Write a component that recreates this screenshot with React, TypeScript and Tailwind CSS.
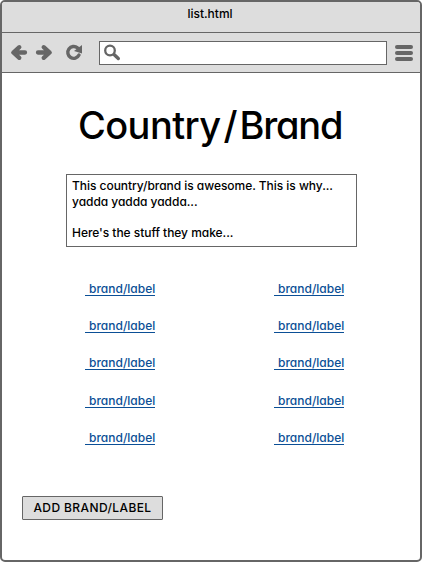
const LINKS = Array.from({ length: 10 }, () => 'brand/label');

function Toolbar() {
  return (
    <div className="flex h-[40px] items-start border-b border-[#666] pt-[8px] pl-[8px]">
      <svg className="h-[24px] w-[90px] shrink-0" viewBox="10 41 90 24" fill="none" stroke="#666">
        <path d="M25 52.500H13.500M19.300 47.200l-6 5.300 6 5.300" strokeWidth="4.300" strokeLinecap="round" strokeLinejoin="round" />
        <path d="M38 52.500h11.500M43.700 47.200l6 5.300-6 5.300" strokeWidth="4.300" strokeLinecap="round" strokeLinejoin="round" />
        <path d="M77.500 47.900A5.900 5.900 0 1 0 79 55" strokeWidth="3.400" strokeLinecap="round" />
        <path d="M82 45v8.500l-8-2.500z" fill="#666" stroke="none" />
      </svg>
      <div className="-ml-px h-[24px] w-[288px] shrink-0 border border-[#666] bg-white">
        <svg className="h-[20px] w-[24px]" viewBox="100 42 24 20" fill="none" stroke="#666">
          <circle cx="110" cy="50.500" r="4.800" strokeWidth="2.300" />
          <path d="M114.300 54.700l4 3.800" strokeWidth="3.400" strokeLinecap="round" />
        </svg>
      </div>
      <div className="ml-[8px] flex flex-col gap-[2px] pt-[4px]">
        <div className="h-[4px] w-[18px] rounded-[2px] bg-[#666]" />
        <div className="h-[4px] w-[18px] rounded-[2px] bg-[#666]" />
        <div className="h-[4px] w-[18px] rounded-[2px] bg-[#666]" />
      </div>
    </div>
  );
}

export default function App() {
  return (
    <div className="h-[562px] w-[422px] bg-white font-['Inter','Liberation_Sans',sans-serif] text-[12px] text-black [font-feature-settings:'cv11']">
      <div className="flex h-full flex-col overflow-hidden rounded-[5px] border-2 border-[#666] bg-white">
        <header className="bg-[#ddd]">
          <div className="h-[31px] border-b border-[#666] pt-[3px] pr-[2px] text-center leading-[17px] font-medium">list.html</div>
          <Toolbar />
        </header>
        <main className="flex flex-col font-medium">
          <h1 className="mt-[28px] ml-[76px] text-[38px] leading-[48px] font-medium whitespace-nowrap">
            <span className="tracking-[-0.600px]">Country</span>
            <span className="mr-[2px] ml-[3px]">/</span>
            <span className="tracking-[-1.200px]">Brand</span>
          </h1>
          <div className="mt-[25px] ml-[64px] h-[73px] w-[291px] border border-[#666] pt-[3px] pl-[5px] leading-[15.700px] tracking-[-0.040px] whitespace-nowrap">
            <p>This country/brand is awesome. This is why...</p>
            <p>yadda yadda yadda...</p>
            <p className="mt-[16px]">Here's the stuff they make...</p>
          </div>
          <div className="mt-[31.800px] ml-[83px] grid w-[259px] grid-cols-[70px_70px] justify-between gap-y-[20.250px]">
            {LINKS.map((label, i) => (
              <a key={i} href="#" className="h-[17px] border-b border-[#0b4f96] pt-px pl-[4px] leading-[17px] whitespace-nowrap text-[#0b4f96]">
                {label}
              </a>
            ))}
          </div>
          <button className="mt-[51.200px] ml-[20px] h-[24px] w-[141px] rounded-[1px] border border-[#666] bg-[#ddd] leading-[20px] font-medium tracking-[0.400px] whitespace-nowrap">
            ADD BRAND/LABEL
          </button>
        </main>
      </div>
    </div>
  );
}
